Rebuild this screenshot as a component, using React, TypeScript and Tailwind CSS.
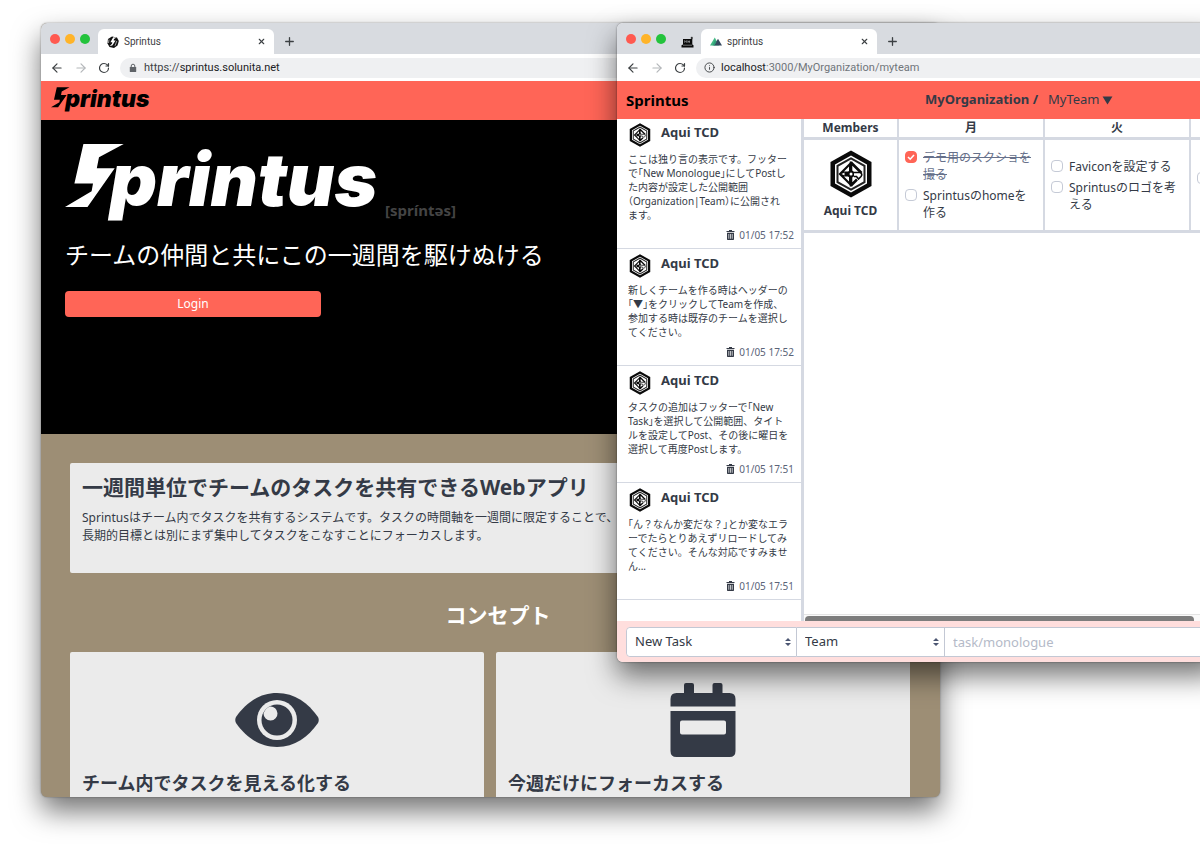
import { ReactNode } from "react";
import { ArrowLeft, ArrowRight, Info, Plus, RotateCw, X } from "lucide-react";

const ui = "font-['Noto_Sans','Noto_Sans_CJK_JP',sans-serif]";

function Wordmark({ className }: { className: string }) {
  return (
    <svg viewBox="0 0 314 76" className={`overflow-visible ${className}`} role="img" aria-label="Sprintus">
      <path
        d="M18.4 1H58.7L34 14.2L31.8 25.2H49.7L22.5 64H0L26.6 48.3L28 40.4H9.4Z"
        fill="currentColor"
      />
      <text
        x="45"
        y="63"
        fontSize="73"
        fontWeight="900"
        fontStyle="italic"
        fontFamily="Inter, sans-serif"
        fill="currentColor"
      >
        printus
      </text>
    </svg>
  );
}

function HexAvatar({ className }: { className: string }) {
  return (
    <svg viewBox="0 0 42 48" className={className} aria-hidden="true">
      <path d="M21 0.5L41.5 12V36L21 47.5L0.5 36V12Z" fill="#0a0a0a" />
      <path d="M21 5.5L37 14.5V33.5L21 42.5L5 33.5V14.5Z" fill="#fff" />
      <path d="M21 7.2L35.5 15.3V32.7L21 40.8L6.5 32.7V15.3Z" fill="#222" />
      <path d="M21 9.5L33.5 16.5V31.5L21 38.5L8.5 31.5V16.5Z" fill="#fff" />
      <path d="M21 11.5L8.5 24L21 36.5Z" fill="#0a0a0a" />
      <path d="M19 16.5V21.5L14 21.5Z M19 31.5V26.5L14 26.5Z" fill="#fff" />
      <path d="M11.5 24L14.5 22.6V25.4Z" fill="#fff" />
      <path
        d="M21 12.5L31.5 23M21 35.5L27 29.5M21 11.5V36.5"
        fill="none"
        stroke="#0a0a0a"
        strokeWidth="2.6"
      />
      <circle cx="21" cy="24" r="3.5" fill="#0a0a0a" />
      <circle cx="21" cy="24" r="1.5" fill="#fff" />
      <path
        d="M24 22.5H30Q33 24 31 26.5L28.5 29L26.5 26.5H24"
        fill="#fff"
        stroke="#0a0a0a"
        strokeWidth="1.6"
      />
    </svg>
  );
}

function BoltFavicon() {
  return (
    <svg viewBox="0 0 12 12" className="size-3 shrink-0" aria-hidden="true">
      <path d="M5 0.5L10 1.5L11.8 5L10.5 9.5L7 12L2.5 11L0.5 7.5L1 3Z" fill="#111" />
      <path d="M6.2 1.2L9.5 1.4L7 3L6.7 4.6H8.6L5.3 9.5L2.6 10L5 7.8L5.3 6.2H3.4Z" fill="#fff" />
      <path d="M2 3.5L1.5 7M9.8 5L8 9.8" stroke="#fff" strokeWidth="0.6" />
    </svg>
  );
}

function LaptopFavicon() {
  return (
    <svg viewBox="0 0 12 12" className="h-3 w-[13px] shrink-0" aria-hidden="true">
      <path d="M1.5 3H10.8V8.5L12 9.2V11.5H0V9.2L1.5 8.5Z" fill="#0a0a0a" />
      <path
        d="M3.2 6.8V4.6L4.2 5.6L5.2 4.6V6.8M6.5 4.6V6.8M6.5 5.6H8M8 4.6V6.8M1.5 9.2H10.5"
        stroke="#b9bcc0"
        strokeWidth="0.6"
        fill="none"
      />
      <path d="M10.3 0.8V3.2M9.2 2H11.4" stroke="#0a0a0a" strokeWidth="0.9" />
    </svg>
  );
}

function MountainFavicon() {
  return (
    <svg viewBox="0 0 12 9" className="h-[9px] w-3 shrink-0" aria-hidden="true">
      <path d="M4.8 0.5L9 8.5H0Z" fill="#41b883" />
      <path d="M8 1.8L12 8.5H3.8Z" fill="#35495e" />
      <path d="M4.8 3.5L6.5 5L4.3 8.5H2.5Z" fill="#2f9c77" />
    </svg>
  );
}

function LockIcon() {
  return (
    <svg viewBox="0 0 10 10" className="size-[10px]" aria-hidden="true">
      <path d="M3.2 4.5V3A1.8 1.8 0 0 1 6.8 3V4.5" fill="none" stroke="#5f6368" strokeWidth="1" />
      <rect x="1.8" y="4" width="6.4" height="5" rx="0.6" fill="#5f6368" />
    </svg>
  );
}

function EyeIcon() {
  return (
    <svg viewBox="0 0 84 54" className="h-[54px] w-[84px]" aria-hidden="true">
      <path
        d="M42 0C60 0 73 10 83 24Q84.5 27 83 30C73 44 60 54 42 54S11 44 1 30Q-0.5 27 1 24C11 10 24 0 42 0Z"
        fill="#343a46"
      />
      <ellipse cx="42" cy="27" rx="20" ry="20" fill="#ebebeb" />
      <ellipse cx="42" cy="27" rx="15.5" ry="15.5" fill="#343a46" />
      <path d="M35 13.5A7 7 0 1 1 28.5 20.5Q30.5 15 35 13.5Z" fill="#ebebeb" />
    </svg>
  );
}

function CalendarIcon() {
  return (
    <svg viewBox="0 0 66 74" className="h-[74px] w-[66px]" aria-hidden="true">
      <path
        d="M0.5 23.5V16Q0.5 10 6.5 10H14V2Q14 0 16 0H22Q24 0 24 2V10H42.5V2Q42.5 0 44.5 0H50.5Q52.5 0 52.5 2V10H59.5Q65.5 10 65.5 16V23.5Z"
        fill="#343a46"
      />
      <path
        d="M0.5 28H65.5V68Q65.5 74 59.5 74H6.5Q0.5 74 0.5 68ZM12 37.5Q10 37.5 10 39.5V49.5Q10 51.5 12 51.5H54Q56 51.5 56 49.5V39.5Q56 37.5 54 37.5Z"
        fillRule="evenodd"
        fill="#343a46"
      />
    </svg>
  );
}

function TrashIcon() {
  return (
    <svg viewBox="0 0 8 10" className="h-[10px] w-[9px]" aria-hidden="true">
      <path
        d="M0 1H2.5V0H5.5V1H8V2H0ZM0.5 2.7H7.5V9.3Q7.5 10 6.8 10H1.2Q0.5 10 0.5 9.3ZM2 4V8.7H2.7V4ZM3.7 4V8.7H4.4V4ZM5.3 4V8.7H6V4Z"
        fillRule="evenodd"
        fill="#343a46"
      />
    </svg>
  );
}

type ChromeProps = {
  title: string;
  favicon: ReactNode;
  pinned?: ReactNode;
  site: ReactNode;
  url: ReactNode;
};

function BrowserChrome({ title, favicon, pinned, site, url }: ChromeProps) {
  return (
    <div className="shrink-0 font-[Roboto,sans-serif] text-[10px] text-[#3c4043]">
      <div className="flex h-[31px] items-end bg-[#d8dbe0] pl-[9px]">
        <div className="flex h-[31px] w-12 shrink-0 items-center gap-[5px]">
          <button aria-label="閉じる" className="size-[10px] rounded-full bg-[#ff5a50]" />
          <button aria-label="最小化" className="size-[10px] rounded-full bg-[#ffb429]" />
          <button aria-label="拡大" className="size-[10px] rounded-full bg-[#23c33c]" />
        </div>
        {pinned && <div className="flex h-[25px] w-[27px] items-center pl-[7px]">{pinned}</div>}
        <div className="flex h-[25px] w-44 shrink-0 items-center gap-[5px] rounded-t-md bg-white pr-2 pl-[9px]">
          {favicon}
          <span className="flex-1">{title}</span>
          <button aria-label="タブを閉じる">
            <X className="size-[9px]" strokeWidth={3} />
          </button>
        </div>
        <button aria-label="新しいタブ" className="flex h-[25px] items-center pl-[9px]">
          <Plus className="size-[13px]" strokeWidth={2.4} />
        </button>
      </div>
      <div className="flex h-[27px] items-center bg-white pl-[9px]">
        <button aria-label="戻る" className="w-6">
          <ArrowLeft className="size-[14px]" />
        </button>
        <button aria-label="進む" className="w-6 text-[#b4b7ba]">
          <ArrowRight className="size-[14px]" />
        </button>
        <button aria-label="再読み込み" className="w-[22px]">
          <RotateCw className="size-3" strokeWidth={2.4} />
        </button>
        <div className="flex h-5 flex-1 items-center gap-1.5 rounded-l-full bg-[#eff0f2] pl-2">
          {site}
          <span className="pt-px text-[11px] leading-4">{url}</span>
        </div>
      </div>
    </div>
  );
}

function LandingWindow() {
  return (
    <section
      className={`absolute top-[23px] left-[41px] flex h-[774px] w-[899px] flex-col overflow-hidden rounded-md bg-[#9d8e75] text-[#343a46] shadow-[0_14px_28px_rgba(0,0,0,0.55),0_0_2px_rgba(0,0,0,0.4)] ${ui}`}
    >
      <BrowserChrome
        title="Sprintus"
        favicon={<BoltFavicon />}
        site={<LockIcon />}
        url={
          <>
            https://<span className="text-[#202124]">sprintus.solunita.net</span>
          </>
        }
      />
      <header className="flex h-[39px] shrink-0 items-center bg-[#ff6557] px-2.5 pb-1 text-black">
        <Wordmark className="h-6 w-[99px]" />
      </header>
      <div className="h-[314px] shrink-0 bg-black px-6 pt-[23px] text-white">
        <div className="flex items-end gap-1.5">
          <Wordmark className="h-[76px] w-[314px]" />
          <span className="text-[15px] leading-[18px] font-bold text-[#444]">[spríntəs]</span>
        </div>
        <p className="mt-4 text-2xl leading-10">チームの仲間と共にこの一週間を駆けぬける</p>
        <button className="mt-4 h-[26px] w-64 rounded bg-[#ff6557] text-xs">Login</button>
      </div>
      <main className="pt-[29px] pr-[30px] pl-[29px]">
        <article className="h-[110px] rounded-xs bg-[#ebebeb] px-3 pt-2">
          <h1 className="text-[21px] leading-8 font-bold">
            一週間単位でチームのタスクを共有できるWebアプリ
          </h1>
          <p className="mt-1.5 text-xs leading-[18px] whitespace-pre-line">
            {"Sprintusはチーム内でタスクを共有するシステムです。タスクの時間軸を一週間に限定することで、\n長期的目標とは別にまず集中してタスクをこなすことにフォーカスします。"}
          </p>
        </article>
        <h2 className="mt-[26px] pl-4 text-center text-[21px] leading-8 font-bold text-white">
          コンセプト
        </h2>
        <div className="mt-[21px] grid grid-cols-2 gap-3">
          {[
            { icon: <EyeIcon />, title: "チーム内でタスクを見える化する" },
            { icon: <CalendarIcon />, title: "今週だけにフォーカスする" },
          ].map((card) => (
            <article key={card.title} className="h-52 rounded-xs bg-[#ebebeb] px-3 pt-5">
              <div className="flex h-[95px] items-center justify-center">{card.icon}</div>
              <h3 className="text-lg leading-8 font-bold">{card.title}</h3>
            </article>
          ))}
        </div>
      </main>
    </section>
  );
}

const posts = [
  {
    body: "ここは独り言の表示です。フッター\nで「New Monologue」にしてPostし\nた内容が設定した公開範囲\n（Organization|Team）に公開され\nます。",
    date: "01/05 17:52",
  },
  {
    body: "新しくチームを作る時はヘッダーの\n「▼」をクリックしてTeamを作成、\n参加する時は既存のチームを選択し\nてください。",
    date: "01/05 17:52",
  },
  {
    body: "タスクの追加はフッターで「New\nTask」を選択して公開範囲、タイト\nルを設定してPost、その後に曜日を\n選択して再度Postします。",
    date: "01/05 17:51",
  },
  {
    body: "「ん？なんか変だな？」とか変なエラ\nーでたらとりあえずリロードしてみ\nてください。そんな対応ですみませ\nん...",
    date: "01/05 17:51",
  },
];

/* Sets brackets at half width, the rest of the text at full width. */
function HalfBrackets({ text }: { text: string }) {
  return text.split(/([「」（）])/).map((part, i) =>
    i % 2 ? (
      <span key={i} className="[font-feature-settings:'halt']">
        {part}
      </span>
    ) : (
      part
    ),
  );
}

function Task({ label, done }: { label: string; done?: boolean }) {
  return (
    <li>
      <label className="flex items-start gap-1.5">
        <span className="relative mt-0.5 flex size-3 shrink-0">
          <input
            type="checkbox"
            defaultChecked={done}
            className="peer size-3 appearance-none rounded-sm border border-[#c5cad6] bg-white checked:border-[#ff6557] checked:bg-[#ff6557]"
          />
          <svg
            viewBox="0 0 12 12"
            className="pointer-events-none absolute inset-0 hidden size-3 peer-checked:block"
            aria-hidden="true"
          >
            <path d="M3 6L5.2 8.2L9 4" fill="none" stroke="#fff" strokeWidth="1.6" />
          </svg>
        </span>
        <span className={done ? "whitespace-pre-line text-[#66708a] line-through" : "whitespace-pre-line"}>
          {label}
        </span>
      </label>
    </li>
  );
}

function PickerArrows() {
  return (
    <svg
      viewBox="0 0 6 8"
      className="pointer-events-none absolute top-2.5 right-[5px] h-2 w-1.5"
      aria-hidden="true"
    >
      <path d="M3 0L6 3H0ZM3 8L0 5H6Z" fill="#4c5672" />
    </svg>
  );
}

function TeamWindow() {
  return (
    <section
      className={`absolute top-[23px] -right-5 left-[617px] flex h-[639px] flex-col overflow-hidden rounded-md bg-white text-[#343a46] shadow-[0_14px_28px_rgba(0,0,0,0.55),0_0_2px_rgba(0,0,0,0.5)] ${ui}`}
    >
      <BrowserChrome
        title="sprintus"
        favicon={<MountainFavicon />}
        pinned={<LaptopFavicon />}
        site={<Info className="size-[11px]" />}
        url={
          <>
            <span className="text-[#202124]">localhost</span>
            <span className="text-[#70757a]">:3000/MyOrganization/myteam</span>
          </>
        }
      />
      <header className="flex h-[38px] shrink-0 items-center bg-[#ff6557] pl-[9px] text-[13px]">
        <a href="#top" className="w-[299px] text-[15px] font-bold text-black">
          Sprintus
        </a>
        <strong className="w-[123px]">MyOrganization /</strong>
        <button className="flex items-center gap-0.5">
          MyTeam
          <svg viewBox="0 0 12 10" className="h-[9px] w-[11px]" aria-hidden="true">
            <path d="M0.5 0.5H11.5L6 9.5Z" fill="#343a46" />
          </svg>
        </button>
      </header>
      <div className="flex min-h-0 flex-1">
        <ul className="-mt-px w-46 shrink-0">
          {posts.map((post, i) => (
            <li key={i} className="border-b border-[#d5d9e2] px-[11px]">
              <div className="flex h-[34px] items-start gap-2.5 pt-[5px] pl-px">
                <HexAvatar className="h-6 w-[22px] shrink-0" />
                <strong className="text-[13px] leading-[18px]">Aqui TCD</strong>
              </div>
              <p className="text-[10px] leading-[14px] whitespace-pre">
                <HalfBrackets text={post.body} />
              </p>
              <div className="-mr-1 flex h-[26px] items-center justify-end gap-1 text-[10px] text-[#5b6478]">
                <button aria-label="削除">
                  <TrashIcon />
                </button>
                <time>{post.date}</time>
              </div>
            </li>
          ))}
        </ul>
        <div className="flex min-w-0 flex-1 flex-col justify-between overflow-hidden border-l-[3px] border-[#d5d9e2]">
          <table className="w-[532px] shrink-0 table-fixed border-separate border-spacing-0 text-xs leading-[17px]">
            <colgroup>
              <col className="w-[95px]" />
              <col className="w-[146px]" />
              <col className="w-[146px]" />
              <col />
            </colgroup>
            <thead>
              <tr className="h-[21px]">
                {["Members", "月", "火", ""].map((day) => (
                  <th key={day} className="border-r-2 border-b-[3px] border-[#d5d9e2] p-0 pb-px font-bold">
                    {day}
                  </th>
                ))}
              </tr>
            </thead>
            <tbody>
              <tr className="h-[93px]">
                <th className="border-r-2 border-b-[3px] border-[#d5d9e2] p-0 pb-0.5 font-bold">
                  <HexAvatar className="mx-auto mb-1 h-12 w-[42px]" />
                  Aqui TCD
                </th>
                <td className="border-r-2 border-b-[3px] border-[#d5d9e2] py-0 pr-0 pl-1.5">
                  <ul className="flex flex-col gap-1">
                    <Task label={"デモ用のスクショを\n撮る"} done />
                    <Task label={"Sprintusのhomeを\n作る"} />
                  </ul>
                </td>
                <td className="border-r-2 border-b-[3px] border-[#d5d9e2] py-0 pr-0 pl-1.5">
                  <ul className="flex flex-col gap-1">
                    <Task label="Faviconを設定する" />
                    <Task label={"Sprintusのロゴを考\nえる"} />
                  </ul>
                </td>
                <td className="border-r-2 border-b-[3px] border-[#d5d9e2] pt-0 pr-0 pb-4 pl-1.5">
                  <ul>
                    <Task label="" />
                  </ul>
                </td>
              </tr>
            </tbody>
          </table>
          <div className="border-t border-[#e4e4e4] bg-[#fafafa] pt-px pr-[26px] pl-px">
            <div className="h-[5px] rounded-t-sm bg-[#7d7d7d]" />
          </div>
        </div>
      </div>
      <form className="flex h-[41px] shrink-0 items-center bg-[#ffdedd] pl-[9px] text-[13px]">
        <div className="relative h-[30px] w-[171px] rounded-l border border-[#c3c8d4] bg-white">
          <select aria-label="種類" className="h-full w-full appearance-none rounded-l bg-white pl-2">
            <option>New Task</option>
            <option>New Monologue</option>
          </select>
          <PickerArrows />
        </div>
        <div className="relative h-[30px] w-[147px] border-y border-[#c3c8d4] bg-white">
          <select aria-label="公開範囲" className="h-full w-full appearance-none bg-white pl-2">
            <option>Team</option>
            <option>Organization</option>
          </select>
          <PickerArrows />
        </div>
        <input
          aria-label="task/monologue"
          placeholder="task/monologue"
          className="h-[30px] min-w-0 flex-1 border border-[#c3c8d4] bg-white pl-2 placeholder:text-[#b4bac8]"
        />
      </form>
    </section>
  );
}

export default function App() {
  return (
    <div className="relative min-h-screen overflow-hidden bg-white">
      <LandingWindow />
      <TeamWindow />
    </div>
  );
}
